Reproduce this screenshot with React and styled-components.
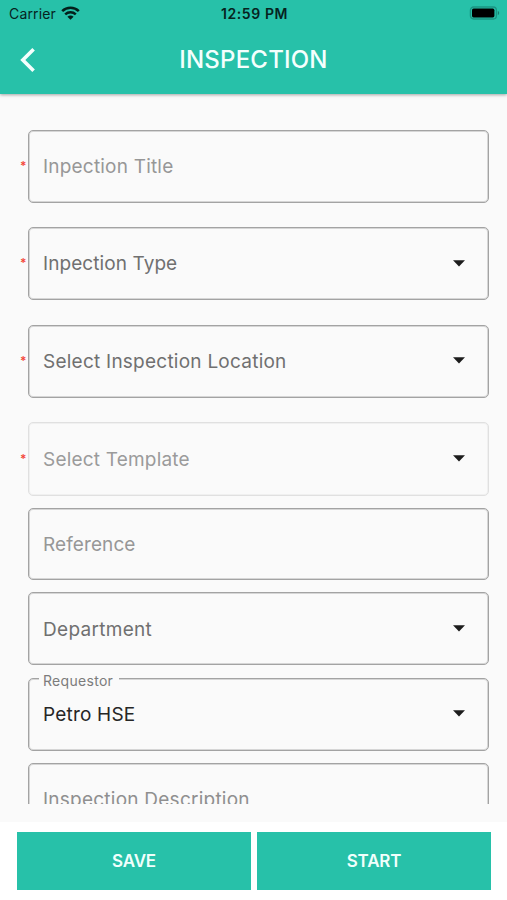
import React from "react";
import styled, { createGlobalStyle } from "styled-components";

const GlobalStyle = createGlobalStyle`
  * {
    box-sizing: border-box;
  }
  body {
    margin: 0;
    background: #fafafa;
    font-family: Inter, "Liberation Sans", sans-serif;
  }
`;

const FIELDS = [
  { label: "Inpection Title", required: true, height: 73, gap: 24, tone: "#979797" },
  {
    label: "Inpection Type",
    required: true,
    select: true,
    height: 73,
    gap: 25,
    spacing: 0.08,
    drop: 1,
  },
  {
    label: "Select Inspection Location",
    required: true,
    select: true,
    height: 73,
    gap: 24,
    spacing: 0.24,
  },
  {
    label: "Select Template",
    required: true,
    select: true,
    disabled: true,
    height: 74,
    gap: 12,
    tone: "#9b9b9b",
    drop: 1,
  },
  { label: "Reference", height: 72, gap: 12, tone: "#979797", spacing: 0.1, drop: 2 },
  { label: "Department", select: true, height: 73, gap: 13, spacing: 0.3, drop: 2 },
  { label: "Requestor", value: "Petro HSE", select: true, height: 73, gap: 12 },
  { label: "Inspection Description", height: 73, gap: 0, tone: "#8f8f8f", spacing: 0.24 },
];

const Screen = styled.div`
  width: 507px;
  height: 900px;
  display: flex;
  flex-direction: column;
  overflow: hidden;
  background: #fafafa;
`;

const Header = styled.header`
  height: 94px;
  flex: none;
  background: #27c1a9;
  box-shadow: 0 1px 3px rgba(0, 0, 0, 0.35);
`;

const StatusBar = styled.div`
  height: 28px;
  display: grid;
  grid-template-columns: 1fr auto 1fr;
  align-items: center;
  padding: 0 7px 0 9px;
  color: #06231e;
  font-size: 14px;
  line-height: 28px;
`;

const Carrier = styled.div`
  display: flex;
  align-items: center;
  gap: 5px;
  letter-spacing: 0.15px;
  svg {
    margin-top: -3px;
  }
`;

const Clock = styled.div`
  font-weight: 600;
  letter-spacing: 0.6px;
`;

const BatteryBox = styled.div`
  display: flex;
  justify-content: flex-end;
  padding-bottom: 2px;
`;

const NavBar = styled.div`
  height: 64px;
  display: grid;
  grid-template-columns: 56px 1fr 56px;
  align-items: center;
`;

const BackButton = styled.button`
  display: flex;
  padding: 0 0 0 19px;
  border: 0;
  background: none;
`;

const Title = styled.h1`
  margin: 0;
  text-align: center;
  color: #f4fffd;
  font-size: 24px;
  font-weight: 500;
  letter-spacing: 0.2px;
  line-height: 64px;
`;

const Form = styled.main`
  height: 710px;
  flex: none;
  margin-bottom: 18px;
  padding: 36px 18px 0 20px;
  overflow: hidden;
`;

const Row = styled.div`
  display: grid;
  grid-template-columns: 8px 1fr;
  height: ${(p) => p.$height}px;
  margin-bottom: ${(p) => p.$gap}px;
`;

const Star = styled.span`
  align-self: center;
  padding-bottom: 1px;
  color: #f3483c;
  font-size: 12px;
  font-weight: 600;
  line-height: 16px;
`;

const Box = styled.div`
  position: relative;
  display: flex;
  align-items: center;
  justify-content: space-between;
  padding: ${(p) => p.$drop}px 23px 0 14px;
  border: 1px solid ${(p) => (p.$disabled ? "#e0e0e0" : "#a3a3a3")};
  border-radius: 5px;
  box-shadow: inset 0 0 0 1px ${(p) => (p.$disabled ? "#f0f0f0" : "#d6d6d6")};
  svg {
    margin-bottom: 2px;
  }
`;

const Text = styled.span`
  color: ${(p) => p.$tone || "#707070"};
  font-size: 19px;
  letter-spacing: ${(p) => p.$spacing}px;
  line-height: 24px;
`;

const FloatLabel = styled.span`
  position: absolute;
  top: -8px;
  left: 10px;
  padding: 0 6px 0 4px;
  background: #fafafa;
  color: #7c7c7c;
  font-size: 14px;
  letter-spacing: 0.3px;
  line-height: 20px;
`;

const Footer = styled.footer`
  flex: 1;
  display: flex;
  gap: 6px;
  padding: 10px 16px 10px 17px;
  background: #fff;
`;

const Action = styled.button`
  flex: 1;
  height: 58px;
  padding: 0;
  border: 0;
  background: #27c1a9;
  color: #f0fffc;
  font-family: inherit;
  font-size: 17px;
  font-weight: 600;
  letter-spacing: -0.2px;
`;

function WifiIcon() {
  return (
    <svg width="19" height="14" viewBox="0 0 19 14" fill="none" stroke="#03201b">
      <path d="M1.2 5.1C5.9.6 13.1.6 17.8 5.1" strokeWidth="2.6" />
      <path d="M4.2 8.4C7.2 5.6 11.8 5.6 14.8 8.4" strokeWidth="2.5" />
      <path d="M9.5 13.8 6.4 10.7c1.7-1.6 4.5-1.6 6.2 0z" fill="#03201b" stroke="none" />
    </svg>
  );
}

function BatteryIcon() {
  return (
    <svg width="31" height="14" viewBox="0 0 31 14">
      <rect x="1.4" y="1" width="26" height="12" rx="3.2" fill="none" stroke="#1b9583" strokeWidth="1.3" />
      <rect x="3" y="2.6" width="22.4" height="8.8" rx="1.6" fill="#000" />
      <path d="M28.8 5c1.8.5 1.8 3.5 0 4z" fill="#168170" />
    </svg>
  );
}

function BackIcon() {
  return (
    <svg width="17" height="26" viewBox="0 0 17 26" fill="none">
      <path d="M14.6 2.2 3.8 13l10.8 10.8" stroke="#f4fffd" strokeWidth="3.6" />
    </svg>
  );
}

function CaretIcon() {
  return (
    <svg width="12" height="7" viewBox="0 0 12 7">
      <path d="M0 .3h12L6 6.5z" fill="#1c1c1c" />
    </svg>
  );
}

function Field({ field }) {
  const { label, value, required, select, disabled, height, gap, tone } = field;
  const { spacing = 0.2, drop = 0 } = field;
  return (
    <Row $height={height} $gap={gap}>
      <Star>{required ? "*" : ""}</Star>
      <Box $disabled={disabled} $drop={drop}>
        {value && <FloatLabel>{label}</FloatLabel>}
        <Text $tone={value ? "#262626" : tone} $spacing={spacing}>
          {value || label}
        </Text>
        {select && <CaretIcon />}
      </Box>
    </Row>
  );
}

export default function App() {
  return (
    <Screen>
      <GlobalStyle />
      <Header>
        <StatusBar>
          <Carrier>
            Carrier
            <WifiIcon />
          </Carrier>
          <Clock>12:59 PM</Clock>
          <BatteryBox>
            <BatteryIcon />
          </BatteryBox>
        </StatusBar>
        <NavBar>
          <BackButton aria-label="Back">
            <BackIcon />
          </BackButton>
          <Title>INSPECTION</Title>
        </NavBar>
      </Header>
      <Form>
        {FIELDS.map((field) => (
          <Field key={field.label} field={field} />
        ))}
      </Form>
      <Footer>
        <Action>SAVE</Action>
        <Action>START</Action>
      </Footer>
    </Screen>
  );
}
